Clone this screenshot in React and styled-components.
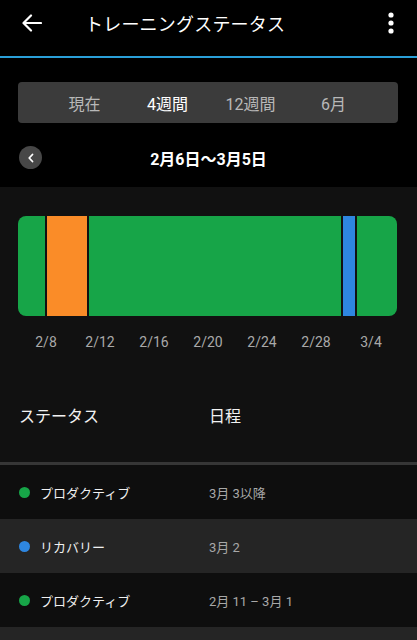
import React, { useState } from 'react';
import styled, { createGlobalStyle } from 'styled-components';

const GlobalStyle = createGlobalStyle`
  html, body {
    margin: 0;
    padding: 0;
    background: #000;
  }
  body {
    font-family: Roboto, "Noto Sans CJK JP", "Noto Sans", sans-serif;
    color: #fff;
  }
`;

const Page = styled.div`
  width: 417px;
  height: 640px;
  overflow: hidden;
  background: #000;
`;

// Header
const Header = styled.header`
  height: 58px;
  box-sizing: border-box;
  display: flex;
  align-items: center;
  padding: 0 22px 10px 22px;
  border-bottom: 2px solid #2a9fd8;
`;

const IconButton = styled.button`
  background: none;
  border: none;
  padding: 0;
  display: flex;
  align-items: center;
  justify-content: center;
  color: #fff;
  cursor: pointer;
`;

const Title = styled.h1`
  flex: 1;
  margin: 0 0 0 43px;
  font-size: 18px;
  font-weight: 400;
  letter-spacing: 0.2px;
`;

// Period tabs
const Tabs = styled.div`
  margin: 24px 19px 0 18px;
  height: 41px;
  background: #3b3b3b;
  border-radius: 4px;
  display: flex;
  align-items: center;
  padding: 0 23px 0 25px;
`;

const Tab = styled.div`
  flex: 1;
  text-align: center;
  font-size: 16px;
  color: ${(p) => (p.active ? '#fff' : '#b8b8b8')};
`;

const DateRow = styled.div`
  height: 64px;
  box-sizing: border-box;
  padding: 5px 19px 0;
  display: flex;
  align-items: center;
  position: relative;
`;

const RoundBack = styled.button`
  width: 23px;
  height: 23px;
  border-radius: 50%;
  background: #474747;
  border: none;
  padding: 0;
  display: flex;
  align-items: center;
  justify-content: center;
  color: #fff;
`;

const DateText = styled.div`
  position: absolute;
  left: 0;
  right: 0;
  text-align: center;
  font-size: 16px;
  font-weight: 700;
  pointer-events: none;
`;

// Chart section
const ChartSection = styled.section`
  background: #111;
  padding: 29px 20px 0 18px;
`;

const Bar = styled.div`
  height: 100px;
  display: flex;
  gap: 2px;
  background: #111;
  border-radius: 8px;
  overflow: hidden;
`;

const Segment = styled.div`
  flex: ${(p) => p.size} 0 0;
  background: ${(p) => p.color};
`;

const Axis = styled.div`
  position: relative;
  height: 52px;
`;

const Tick = styled.span`
  position: absolute;
  top: 18px;
  transform: translateX(-50%);
  font-size: 14px;
  color: #a9a9a9;
`;

const TableHead = styled.div`
  display: flex;
  align-items: center;
  padding: 0 1px;
  height: 94px;
  font-size: 16px;
  color: #f2f2f2;
`;

const StatusCol = styled.div`
  width: 190px;
  display: flex;
  align-items: center;
`;

const Separator = styled.div`
  height: 3px;
  background: #363636;
`;

const Row = styled.div`
  height: 54px;
  display: flex;
  align-items: center;
  padding: 0 19px;
  background: ${(p) => (p.alt ? '#252525' : '#0e0e0e')};
`;

const Dot = styled.span`
  width: 11px;
  height: 11px;
  border-radius: 50%;
  background: ${(p) => p.color};
  margin-right: 10px;
  flex-shrink: 0;
`;

const StatusLabel = styled.span`
  font-size: 13px;
  color: #f0f0f0;
`;

const RangeLabel = styled.span`
  font-size: 13px;
  color: #a8a8a8;
`;

const GREEN = '#17a548';
const ORANGE = '#fa8c28';
const BLUE = '#2e86e0';

const segments = [
  { size: 27, color: GREEN },
  { size: 40, color: ORANGE },
  { size: 253, color: GREEN },
  { size: 12, color: BLUE },
  { size: 40, color: GREEN },
];

const ticks = [
  { label: '2/8', x: 28 },
  { label: '2/12', x: 82 },
  { label: '2/16', x: 136 },
  { label: '2/20', x: 190 },
  { label: '2/24', x: 244 },
  { label: '2/28', x: 298 },
  { label: '3/4', x: 353 },
];

const rows = [
  { label: 'プロダクティブ', color: GREEN, range: '3月 3以降' },
  { label: 'リカバリー', color: BLUE, range: '3月 2' },
  { label: 'プロダクティブ', color: GREEN, range: '2月 11 – 3月 1' },
  { label: '', color: null, range: '' },
];

const App = () => {
  const [period, setPeriod] = useState('4週間');
  const periods = ['現在', '4週間', '12週間', '6月'];

  return (
    <Page>
      <GlobalStyle />
      <Header>
        <IconButton aria-label="戻る">
          <svg width="20" height="18" viewBox="0 0 20 18" fill="none" stroke="#fff" strokeWidth="2.2" strokeLinecap="round" strokeLinejoin="round">
            <path d="M19 9H2" />
            <path d="M9 1.5L1.5 9 9 16.5" />
          </svg>
        </IconButton>
        <Title>トレーニングステータス</Title>
        <IconButton aria-label="メニュー">
          <svg width="8" height="22" viewBox="0 0 8 22" fill="#fff">
            <circle cx="4" cy="3" r="2.6" />
            <circle cx="4" cy="11" r="2.6" />
            <circle cx="4" cy="19" r="2.6" />
          </svg>
        </IconButton>
      </Header>

      <Tabs>
        {periods.map((p) => (
          <Tab key={p} active={p === period} onClick={() => setPeriod(p)}>
            {p}
          </Tab>
        ))}
      </Tabs>

      <DateRow>
        <RoundBack aria-label="前へ">
          <svg width="8" height="10" viewBox="0 0 8 10" fill="none" stroke="#fff" strokeWidth="1.8" strokeLinecap="round" strokeLinejoin="round">
            <path d="M5.5 1.5L2.2 5l3.3 3.5" />
          </svg>
        </RoundBack>
        <DateText>2月6日〜3月5日</DateText>
      </DateRow>

      <ChartSection>
        <Bar>
          {segments.map((s, i) => (
            <Segment key={i} size={s.size} color={s.color} />
          ))}
        </Bar>
        <Axis>
          {ticks.map((t) => (
            <Tick key={t.label} style={{ left: t.x }}>
              {t.label}
            </Tick>
          ))}
        </Axis>
        <TableHead>
          <StatusCol>ステータス</StatusCol>
          <div>日程</div>
        </TableHead>
      </ChartSection>
      <Separator />
      {rows.map((r, i) => (
        <Row key={i} alt={i % 2 === 1}>
          <StatusCol>
            {r.color && <Dot color={r.color} />}
            <StatusLabel>{r.label}</StatusLabel>
          </StatusCol>
          <RangeLabel>{r.range}</RangeLabel>
        </Row>
      ))}
    </Page>
  );
};

export default App;
